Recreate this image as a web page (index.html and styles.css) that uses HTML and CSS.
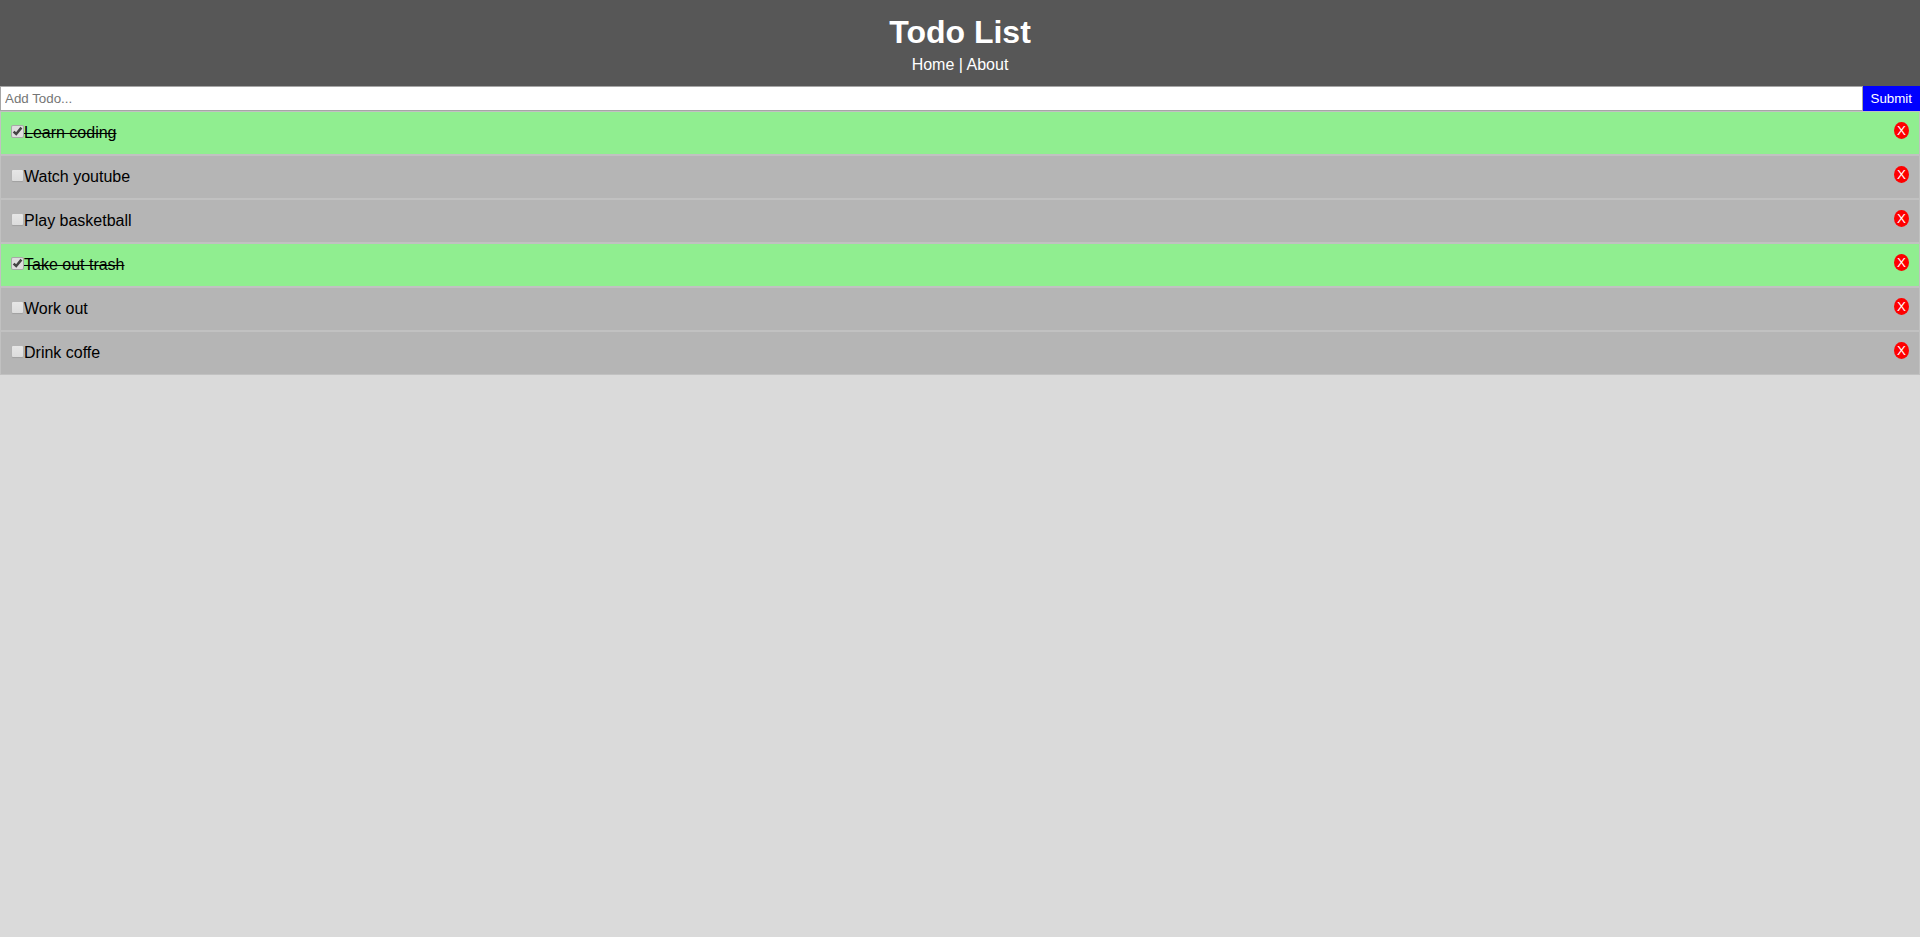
FILE: index.html
```html
<!DOCTYPE html>
<html lang="en">
<head>
<meta charset="utf-8">
<title>Todo List</title>
<link rel="stylesheet" href="styles.css">
</head>
<body>
<header class="header">
  <h1 class="title">Todo List</h1>
  <nav><a class="link" href="#home">Home</a> | <a class="link" href="#about">About</a></nav>
</header>
<main>
  <form class="add-form">
    <input class="add-input" type="text" name="title" placeholder="Add Todo..." aria-label="Add Todo">
    <button class="submit" type="submit">Submit</button>
  </form>
  <ul class="list">
    <li class="item done"><label class="label"><input class="check" type="checkbox" checked><span>Learn coding</span></label><button class="delete" type="button">X</button></li>
    <li class="item"><label class="label"><input class="check" type="checkbox"><span>Watch youtube</span></label><button class="delete" type="button">X</button></li>
    <li class="item"><label class="label"><input class="check" type="checkbox"><span>Play basketball</span></label><button class="delete" type="button">X</button></li>
    <li class="item done"><label class="label"><input class="check" type="checkbox" checked><span>Take out trash</span></label><button class="delete" type="button">X</button></li>
    <li class="item"><label class="label"><input class="check" type="checkbox"><span>Work out</span></label><button class="delete" type="button">X</button></li>
    <li class="item"><label class="label"><input class="check" type="checkbox"><span>Drink coffe</span></label><button class="delete" type="button">X</button></li>
  </ul>
</main>
</body>
</html>
```
FILE: styles.css
```css
* {
  box-sizing: border-box;
  margin: 0;
  padding: 0;
}

body {
  background: #dadada;
  color: #000;
  font-family: "Liberation Sans", Arial, sans-serif;
  font-size: 16px;
  line-height: 22px;
}

.header {
  padding: 10px;
  background: #575757;
  color: #fff;
  text-align: center;
}

.title {
  font-size: 32px;
  line-height: 44px;
}

.link {
  color: #fff;
  text-decoration: none;
}

.add-form {
  display: flex;
  height: 25px;
}

.add-input {
  flex: 1;
  min-width: 0;
  padding: 0 4px;
  border: 1px solid #a6a6a6;
  background: #fff;
  font-family: inherit;
}

.add-input::placeholder {
  color: #757575;
}

.submit {
  padding: 0 8px;
  border: none;
  background: #00f;
  color: #fff;
  font-family: inherit;
  cursor: pointer;
}

.list {
  list-style: none;
}

.item {
  display: flex;
  justify-content: space-between;
  align-items: flex-start;
  padding: 10px;
  border: 1px solid #c1c1c1;
  background: #b5b5b5;
}

.done {
  background: #90ee90;
}

.done .label {
  text-decoration: line-through;
}

.label {
  display: flex;
  align-items: flex-start;
}

.check {
  appearance: none;
  width: 11px;
  height: 11px;
  margin: 4px 1px;
  border-radius: 1px;
  background: linear-gradient(#e6e6e6, #dcdcdc);
  box-shadow: 0 1px 1px #a0a0a0;
}

.check:checked {
  background: #dedede url("data:image/svg+xml,%3Csvg xmlns='http://www.w3.org/2000/svg' viewBox='0 0 11 11'%3E%3Cpath d='M1.6 5.6 4.2 8 9.4 1.6' fill='none' stroke='%23444' stroke-width='2.5'/%3E%3C/svg%3E") center / 11px 11px;
  box-shadow: 0 0 0 1px #a8a8a8;
}

.delete {
  padding: 1px 3px;
  border: none;
  border-radius: 50%;
  background: #f00;
  color: #fff;
  font-family: inherit;
  cursor: pointer;
}
```
